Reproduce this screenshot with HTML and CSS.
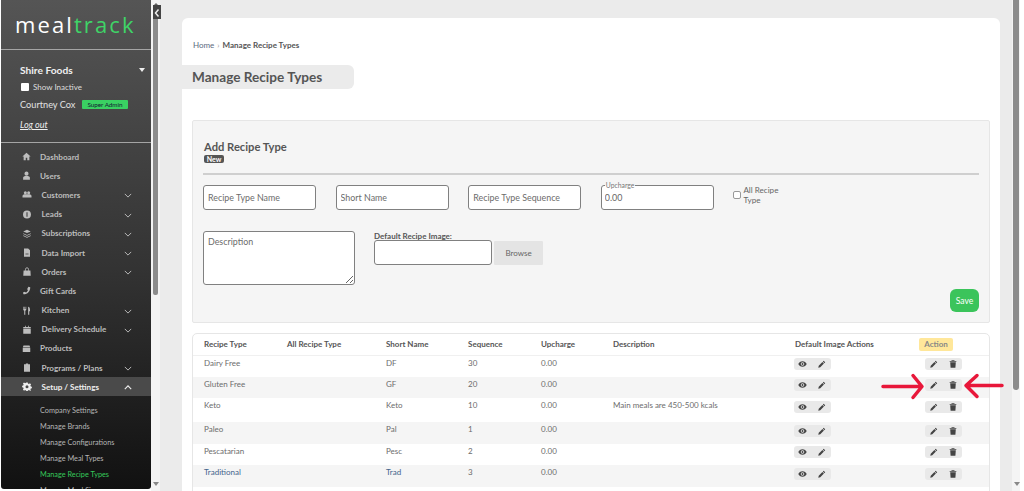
FILE: index.html
```html
<!DOCTYPE html>
<html lang="en">
<head>
<meta charset="utf-8">
<title>Manage Recipe Types</title>
<link rel="stylesheet" href="styles.css">
</head>
<body>
<svg class="defs" width="0" height="0" aria-hidden="true">
  <symbol id="i-chev" viewBox="0 0 10 6"><path d="M1 1l4 4 4-4" fill="none" stroke="currentColor" stroke-width="1.2"/></symbol>
  <symbol id="i-up" viewBox="0 0 10 6"><path d="M1 5l4-4 4 4" fill="none" stroke="currentColor" stroke-width="1.4"/></symbol>
  <symbol id="i-eye" viewBox="0 0 16 12"><path d="M8 1C4.500 1 1.800 3.300.5 6c1.300 2.700 4 5 7.500 5s6.200-2.300 7.500-5C14.200 3.300 11.500 1 8 1zm0 8.200A3.200 3.200 0 1 1 8 2.800a3.200 3.200 0 0 1 0 6.400zM8 4.300a1.700 1.700 0 1 0 0 3.400 1.700 1.700 0 0 0 0-3.400z" fill="currentColor"/></symbol>
  <symbol id="i-pen" viewBox="0 0 12 12"><path d="M8.500 1.200l2.300 2.300-1.200 1.200-2.300-2.300zM6.600 3.100l2.300 2.300-5.500 5.500-3 .7.700-3z" fill="currentColor"/></symbol>
  <symbol id="i-trash" viewBox="0 0 12 12"><path d="M4 .5h4l.5 1H11v1.300H1V1.500h2.500zM1.800 3.500h8.400l-.6 8H2.400z" fill="currentColor"/></symbol>
</svg>

<div class="shell">
  <aside class="sidebar">
    <div class="logo"><span class="logo-a">meal</span><span class="logo-b">track</span></div>
    <div class="account">
      <div class="org"><span>Shire Foods</span><span class="org-caret"></span></div>
      <label class="inactive"><span class="fake-check"></span>Show Inactive</label>
      <div class="who"><span>Courtney Cox</span><span class="role">Super Admin</span></div>
      <a class="logout">Log out</a>
    </div>
    <nav class="nav">
      <a class="nav-item"><svg class="nav-ico" viewBox="0 0 12 12"><path d="M6 1L.5 6h1.700v5h2.800V7.500h2V11h2.800V6h1.700z" fill="currentColor"/></svg><span class="nav-label">Dashboard</span></a>
      <a class="nav-item"><svg class="nav-ico" viewBox="0 0 12 12"><circle cx="6" cy="3.500" r="2.700" fill="currentColor"/><path d="M1.500 11.500V9c0-1.500 1.500-2.300 4.500-2.300s4.500.8 4.500 2.300v2.500z" fill="currentColor"/></svg><span class="nav-label">Users</span></a>
      <a class="nav-item sub"><svg class="nav-ico" viewBox="0 0 12 12"><circle cx="3.800" cy="3.500" r="2" fill="currentColor"/><circle cx="8.200" cy="3.500" r="2" fill="currentColor"/><path d="M0 10V8c0-1.500 1.500-2.200 3.800-2.200h4.400C10.500 5.800 12 6.500 12 8v2z" fill="currentColor"/></svg><span class="nav-label">Customers</span><svg class="nav-chev"><use href="#i-chev"/></svg></a>
      <a class="nav-item sub"><svg class="nav-ico" viewBox="0 0 12 12"><circle cx="6" cy="6" r="5.300" fill="currentColor"/><rect x="5.300" y="3" width="1.400" height="6" fill="#3b3b3b"/></svg><span class="nav-label">Leads</span><svg class="nav-chev"><use href="#i-chev"/></svg></a>
      <a class="nav-item sub"><svg class="nav-ico" viewBox="0 0 12 12"><path d="M6 1l5 2.200-5 2.200-5-2.200zM1 5.800l5 2.200 5-2.200V6.800L6 9 1 6.800zM1 8.400l5 2.200 5-2.200v1L6 11.600 1 9.400z" fill="currentColor"/></svg><span class="nav-label">Subscriptions</span><svg class="nav-chev"><use href="#i-chev"/></svg></a>
      <a class="nav-item sub"><svg class="nav-ico" viewBox="0 0 12 12"><path d="M2 .5h5.500L10 3v8.500H2z" fill="currentColor"/><path d="M4 8h4" stroke="#333" stroke-width="1"/></svg><span class="nav-label">Data Import</span><svg class="nav-chev"><use href="#i-chev"/></svg></a>
      <a class="nav-item sub"><svg class="nav-ico" viewBox="0 0 12 12"><path d="M1.500 4.500h9l.5 7H1z" fill="currentColor"/><path d="M4 5V3a2 2 0 0 1 4 0v2" fill="none" stroke="currentColor" stroke-width="1.100"/></svg><span class="nav-label">Orders</span><svg class="nav-chev"><use href="#i-chev"/></svg></a>
      <a class="nav-item"><svg class="nav-ico" viewBox="0 0 12 12"><path d="M8.500 1L11 1.500c0 5.500-3.500 9.500-9 9.500L1.200 8.500 4 7.500l1 1.200C6.500 8 7.500 6.800 8 5.200L6.800 4.200z" fill="currentColor"/></svg><span class="nav-label">Gift Cards</span></a>
      <a class="nav-item sub"><svg class="nav-ico" viewBox="0 0 12 12"><path d="M1 1v3.500c0 1 .7 1.500 1.300 1.700V11.500h1.400V6.200C4.300 6 5 5.500 5 4.500V1H4.200v3H3.500V1h-1v3h-.7V1zM7.500 1c1.800 0 2.500 2 2.500 4.500V7H9v4.500H7.500z" fill="currentColor"/></svg><span class="nav-label">Kitchen</span><svg class="nav-chev"><use href="#i-chev"/></svg></a>
      <a class="nav-item sub"><svg class="nav-ico" viewBox="0 0 12 12"><path d="M1 2.500h2.500V1h1v1.500h3V1h1v1.500H11v2H1zM1 5.300h10v6.200H1z" fill="currentColor"/></svg><span class="nav-label">Delivery Schedule</span><svg class="nav-chev"><use href="#i-chev"/></svg></a>
      <a class="nav-item"><svg class="nav-ico" viewBox="0 0 12 12"><path d="M2 2h8l1 2.500H1zM1 5.300h10v5.200H1z" fill="currentColor"/></svg><span class="nav-label">Products</span></a>
      <a class="nav-item sub"><svg class="nav-ico" viewBox="0 0 12 12"><path d="M4.500 1.500V.7h3v.8H10v10.300H2V1.500z" fill="currentColor"/></svg><span class="nav-label">Programs / Plans</span><svg class="nav-chev"><use href="#i-chev"/></svg></a>
      <a class="nav-item sub open"><svg class="nav-ico" viewBox="0 0 12 12"><path d="M5 .5h2l.3 1.600 1.300.6L10 1.800l1.400 1.400-.9 1.400.6 1.300 1.400.3v2l-1.400.3-.6 1.300.9 1.400L10 11.500l-1.400-.9-1.300.6L7 12H5l-.3-.8-1.300-.6-1.400.9L.6 10.100l.9-1.400-.6-1.300L-.5 7V5l1.400-.3.6-1.300-.9-1.400L2 .6l1.400.9 1.300-.6zM6 4.200a2 2 0 1 0 0 4 2 2 0 0 0 0-4z" fill="currentColor"/></svg><span class="nav-label">Setup / Settings</span><svg class="nav-chev"><use href="#i-up"/></svg></a>
    </nav>
    <div class="subnav">
      <a>Company Settings</a>
      <a>Manage Brands</a>
      <a>Manage Configurations</a>
      <a>Manage Meal Types</a>
      <a class="current">Manage Recipe Types</a>
      <a>Manage Meal Sizes</a>
    </div>
  </aside>

  <div class="side-scroll"><span class="arrow-up"></span><span class="side-thumb"></span><span class="arrow-down"></span></div>
  <button class="collapse" aria-label="Collapse"><svg viewBox="0 0 6 10"><path d="M4.500 1.500L1.500 5l3 3.500" fill="none" stroke="#eee" stroke-width="1.500"/></svg></button>

  <main class="main">
    <section class="card">
      <div class="crumbs"><a>Home</a><span class="sep">›</span><b>Manage Recipe Types</b></div>
      <h1 class="page-title">Manage Recipe Types</h1>

      <form class="panel">
        <h2 class="panel-title">Add Recipe Type</h2>
        <span class="badge">New</span>
        <div class="rule"></div>
        <div class="row-one">
          <input class="field" placeholder="Recipe Type Name">
          <input class="field" placeholder="Short Name">
          <input class="field" placeholder="Recipe Type Sequence">
          <div class="legend-field"><span class="legend">Upcharge</span><input class="field upcharge" value="0.00"></div>
          <label class="all-type"><input type="checkbox" class="check"><span>All Recipe Type</span></label>
        </div>
        <div class="row-two">
          <textarea class="area" placeholder="Description"></textarea>
          <div class="file-wrap">
            <div class="file-label">Default Recipe Image:</div>
            <div class="file-row"><input class="field file-box"><span class="browse">Browse</span></div>
          </div>
        </div>
        <div class="save-row"><button type="button" class="save">Save</button></div>
      </form>

      <div class="table-box">
        <table class="types">
          <colgroup><col class="c1"><col class="c2"><col class="c3"><col class="c4"><col class="c5"><col class="c6"><col class="c7"><col class="c8"></colgroup>
          <thead>
            <tr><th>Recipe Type</th><th>All Recipe Type</th><th>Short Name</th><th>Sequence</th><th>Upcharge</th><th>Description</th><th>Default Image Actions</th><th><span class="hl">Action</span></th></tr>
          </thead>
          <tbody>
            <tr><td>Dairy Free</td><td></td><td>DF</td><td>30</td><td>0.00</td><td></td><td><span class="btns"><svg class="eye"><use href="#i-eye"/></svg><svg><use href="#i-pen"/></svg></span></td><td><span class="btns"><svg><use href="#i-pen"/></svg><svg><use href="#i-trash"/></svg></span></td></tr>
            <tr><td>Gluten Free</td><td></td><td>GF</td><td>20</td><td>0.00</td><td></td><td><span class="btns"><svg class="eye"><use href="#i-eye"/></svg><svg><use href="#i-pen"/></svg></span></td><td><span class="btns"><svg><use href="#i-pen"/></svg><svg><use href="#i-trash"/></svg></span></td></tr>
            <tr class="tall"><td>Keto</td><td></td><td>Keto</td><td>10</td><td>0.00</td><td>Main meals are 450-500 kcals</td><td><span class="btns"><svg class="eye"><use href="#i-eye"/></svg><svg><use href="#i-pen"/></svg></span></td><td><span class="btns"><svg><use href="#i-pen"/></svg><svg><use href="#i-trash"/></svg></span></td></tr>
            <tr><td>Paleo</td><td></td><td>Pal</td><td>1</td><td>0.00</td><td></td><td><span class="btns"><svg class="eye"><use href="#i-eye"/></svg><svg><use href="#i-pen"/></svg></span></td><td><span class="btns"><svg><use href="#i-pen"/></svg><svg><use href="#i-trash"/></svg></span></td></tr>
            <tr><td>Pescatarian</td><td></td><td>Pesc</td><td>2</td><td>0.00</td><td></td><td><span class="btns"><svg class="eye"><use href="#i-eye"/></svg><svg><use href="#i-pen"/></svg></span></td><td><span class="btns"><svg><use href="#i-pen"/></svg><svg><use href="#i-trash"/></svg></span></td></tr>
            <tr><td class="link">Traditional</td><td></td><td class="link">Trad</td><td>3</td><td>0.00</td><td></td><td><span class="btns"><svg class="eye"><use href="#i-eye"/></svg><svg><use href="#i-pen"/></svg></span></td><td><span class="btns"><svg><use href="#i-pen"/></svg><svg><use href="#i-trash"/></svg></span></td></tr>
          </tbody>
        </table>
      </div>
    </section>
  </main>

  <div class="page-scroll"><span class="page-thumb"></span><span class="arrow-down"></span></div>

  <svg class="annot" viewBox="0 0 1024 491" aria-hidden="true">
    <path d="M883 386.500H921M913 375.500L922 386.500L913 397.500" fill="none" stroke="#e8173a" stroke-width="3.500" stroke-linecap="round" stroke-linejoin="round"/>
    <path d="M1002 385.500H966M977 375.500L966 385.500L977 396.500" fill="none" stroke="#e8173a" stroke-width="3.500" stroke-linecap="round" stroke-linejoin="round"/>
  </svg>
</div>
</body>
</html>
```

FILE: styles.css
```css
* { box-sizing: border-box; }
html, body { margin: 0; height: 491px; overflow: hidden; background: #fff; }
body { font-family: Lato, "Open Sans", sans-serif; color: #666; font-size: 8px; }
.defs { position: absolute; }
a { text-decoration: none; color: inherit; }

.shell { position: relative; display: flex; width: 1024px; height: 491px; overflow: hidden; padding-left: 1px; }

/* Sidebar */
.sidebar { width: 150px; height: 489px; flex: none; overflow: hidden; color: #ddd; border-radius: 0 0 3px 3px;
  background: linear-gradient(180deg, #555 0%, #333 55%, #111 100%); }
.logo { height: 50px; padding: 9px 0 0 14px; border-bottom: 1px solid #a5a5a5; font-family: "Open Sans", sans-serif; font-size: 22px; line-height: 30px; letter-spacing: 2.100px; white-space: nowrap; }
.logo-a { color: #fff; font-weight: 400; }
.logo-b { color: #3fd467; font-weight: 400; }
.account { height: 93px; padding: 13px 6px 0 19px; border-bottom: 1px solid #a5a5a5; }
.org { display: flex; justify-content: space-between; align-items: center; font-size: 10.200px; font-weight: 700; color: #f0f0f0; height: 13px; }
.org-caret { border: 3px solid transparent; border-top: 4px solid #eee; border-bottom: 0; }
.inactive { display: flex; align-items: center; gap: 4px; margin: 5px 0 0 1px; font-size: 8px; color: #ddd; height: 11px; }
.fake-check { width: 8px; height: 8px; background: #fff; border-radius: 1px; }
.who { display: flex; align-items: center; gap: 7px; margin-top: 6px; font-size: 9.200px; color: #e2e2e2; height: 12px; }
.role { background: #3ad062; color: #123; font-size: 6.300px; height: 9px; line-height: 9px; padding: 0 5px; border-radius: 1px; }
.logout { display: block; margin-top: 9px; font-size: 9px; font-style: italic; text-decoration: underline; color: #eee; }

.nav { padding-top: 4px; }
.nav-item { display: flex; align-items: center; height: 19.200px; padding: 0 19px 0 21px; font-size: 8.100px; font-weight: 700; color: #bdbdbd; }
.nav-ico { width: 9px; height: 9px; flex: none; margin-right: 9px; }
.sub .nav-label { margin-left: 1.500px; }
.sub .nav-ico { width: 10px; margin-right: 8px; }
.nav-chev { width: 8px; height: 5px; margin-left: auto; margin-top: 2px; flex: none; }
.open { background: #4a4a4a; color: #eee; }
.subnav { padding-top: 7px; }
.subnav a { display: block; height: 16px; line-height: 16px; padding-left: 39px; font-size: 7.300px; color: #b5b5b5; white-space: nowrap; }
.subnav .current { color: #35c95a; }

/* Scrollbars */
.side-scroll { position: relative; width: 9px; height: 491px; flex: none; background: #f4f4f4; }
.side-thumb { position: absolute; left: 2px; top: 8px; width: 5px; height: 287px; border-radius: 0 0 2px 2px; background: #8c8c8c; }
.arrow-up { position: absolute; left: 2px; top: 3px; border: 3px solid transparent; border-bottom: 3px solid #666; border-top: 0; }
.arrow-down { position: absolute; left: 1.500px; bottom: 5px; border: 3.500px solid transparent; border-top: 4px solid #888; border-bottom: 0; }
.collapse { position: absolute; left: 153px; top: 5px; width: 8px; height: 14px; padding: 1px; border: 0; background: #444; }
.collapse svg { display: block; width: 6px; height: 10px; margin-top: 1px; }
.page-scroll { position: relative; width: 8px; height: 491px; flex: none; margin-right: 4px; background: #f4f4f4; }
.page-thumb { position: absolute; left: 1px; top: 0; width: 6px; height: 390px; border-radius: 0 0 3px 3px; background: #8c8c8c; }

/* Main */
.main { flex: 1; min-width: 0; height: 491px; background: #ebebeb; padding: 18px 12px 0 22px; }
.card { height: 480px; background: #fff; border-radius: 6px 6px 0 0; overflow: hidden; }
.crumbs { padding: 22px 0 0 11px; height: 47px; font-size: 8px; line-height: 10px; color: #5a6a80; }
.crumbs .sep { margin: 0 3px; color: #999; }
.crumbs b { color: #555; font-weight: 700; }
.page-title { width: 172px; height: 24px; margin: 0; padding-left: 10px; background: #ebebeb; border-radius: 0 6px 6px 0; font-size: 13.600px; line-height: 24px; font-weight: 700; color: #555; white-space: nowrap; }

.panel { height: 203px; margin: 31px 10px 0 10px; padding: 20px 10px 0 10px; background: #f5f5f5; border: 1px solid #e6e6e6; border-radius: 2px; }
.panel-title { margin: 0 0 0 1px; font-size: 11.200px; line-height: 12px; font-weight: 700; color: #555; }
.badge { display: block; width: 20px; height: 8px; margin: 2px 0 0 1px; background: #555; color: #fff; font-size: 7px; font-weight: 700; line-height: 8px; text-align: center; border-radius: 2px; }
.rule { height: 2px; margin-top: 10px; background: #cfcfcf; }
.row-one { display: flex; align-items: flex-start; gap: 19.600px; margin-top: 10px; }
.field { width: 113px; height: 25px; padding: 0 4px; border: 1px solid #808080; border-radius: 3px; background: #fff; font-family: inherit; font-size: 8.900px; color: #666; outline: 0; }
.field::placeholder, .area::placeholder { color: #6c6c6c; opacity: 1; }
.legend-field { position: relative; }
.upcharge { padding-left: 3px; }
.legend { position: absolute; left: 4px; top: -3px; padding: 0 1px; background: linear-gradient(#f5f5f5 50%, #fff 50%); font-size: 6.800px; line-height: 7px; color: #777; }
.all-type { display: flex; align-items: flex-start; gap: 2px; width: 58px; font-size: 8.100px; line-height: 10px; color: #666; }
.check { width: 8px; height: 8px; margin: 6px 0 0 0; flex: none; appearance: none; background: #fff; border: 1px solid #999; border-radius: 2px; }
.all-type span { display: block; width: 40px; }
.row-two { display: flex; align-items: flex-start; gap: 19px; margin-top: 21px; }
.area { display: block; width: 152px; height: 54px; padding: 4px 4px; border: 1px solid #808080; border-radius: 3px; background: #fff; font-family: inherit; font-size: 8.900px; outline: 0; }
.file-wrap { padding-top: 1px; }
.file-label { font-size: 8px; line-height: 8px; font-weight: 700; color: #555; }
.file-row { display: flex; gap: 2px; }
.file-box { width: 118px; }
.browse { width: 49px; height: 24px; margin-top: 1px; background: #e4e4e4; border-radius: 1px; text-align: center; font-size: 8px; line-height: 24px; color: #666; }
.save-row { display: flex; justify-content: flex-end; margin-top: 4px; }
.save { width: 29px; height: 23px; padding: 0; border: 0; border-radius: 6px; background: #3bc45b; color: #fff; font-family: inherit; font-size: 8.500px; }

/* Table */
.table-box { margin: 10px 10px 0 10px; border: 1px solid #e6e6e6; border-radius: 5px; height: 170px; overflow: hidden; }
.types { width: 100%; table-layout: fixed; border-collapse: collapse; font-size: 8px; }
.c1 { width: 94px; } .c2 { width: 99px; } .c3 { width: 82px; } .c4 { width: 73px; } .c5 { width: 72px; } .c6 { width: 182px; } .c7 { width: 131px; }
.types th { height: 21px; padding: 0; text-align: left; font-weight: 700; color: #555; border-bottom: 1px solid #f0f0f0; white-space: nowrap; }
.types th:first-child, .types td:first-child { padding-left: 11px; }
.types td { height: 21.500px; padding: 3px 0 0 0; vertical-align: top; color: #6c6c6c; line-height: 9px; }
.types tbody tr:nth-child(even) { background: #f5f5f5; }
.types .tall td { height: 24px; }
.types .link { color: #44648c; }
.hl { display: inline-block; width: 34px; height: 13px; margin-left: -7px; background: #ffe79a; border-radius: 2px; line-height: 13px; text-align: center; color: #888; }
.btns { display: flex; justify-content: space-between; align-items: center; width: 37px; height: 12px; margin: -0.5px 0 0 -1px; padding: 0 5px; background: #e9e9e9; border-radius: 3px; color: #444; }
.btns svg { width: 8px; height: 8px; flex: none; }
.btns .eye { width: 9px; margin-left: -1px; }

.annot { position: absolute; left: 0; top: 0; width: 1024px; height: 491px; pointer-events: none; }
```
